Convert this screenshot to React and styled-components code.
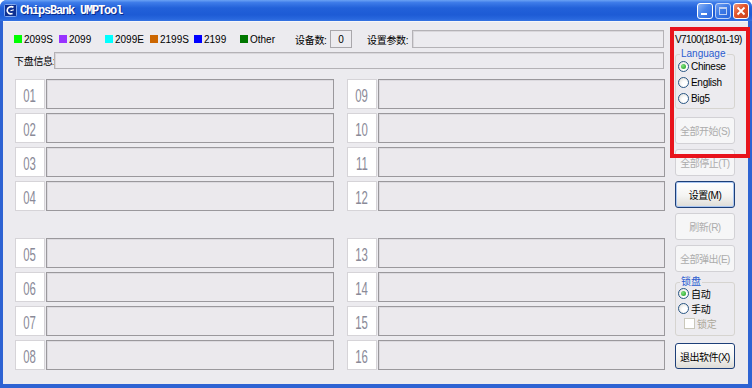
import React from 'react'
import styled, { createGlobalStyle } from 'styled-components'

const GlobalStyle = createGlobalStyle`
    html, body {
        margin: 0;
        padding: 0;
        background: #ffffff;
    }
    body {
        width: 752px;
        height: 388px;
        overflow: hidden;
        font-family: "Liberation Sans", "Noto Sans CJK SC", sans-serif;
    }
`

const Window = styled.div`
    position: relative;
    width: 752px;
    height: 388px;
    display: flex;
    flex-direction: column;
    background: #2e63d3;
    border-radius: 7px 7px 0 0;
    overflow: hidden;
`

const TitleBar = styled.div`
    height: 21px;
    flex: none;
    display: flex;
    align-items: center;
    padding: 0 3px 0 4px;
    background: linear-gradient(180deg, #6aa2f4 0%, #3e7ce9 12%, #2261d9 38%, #1d5bd5 70%, #2867dd 90%, #3673e2 100%);
`

const Title = styled.span`
    margin-left: 3px;
    flex: 1;
    color: #ffffff;
    font-family: "Liberation Mono", monospace;
    font-weight: bold;
    font-size: 12px;
    letter-spacing: -1.2px;
    text-shadow: 1px 1px 0 #0a2a8a;
`

const CaptionButtons = styled.div`
    display: flex;
    gap: 2px;
`

const CaptionButton = styled.div`
    width: 16px;
    height: 16px;
    box-sizing: border-box;
    border: 1px solid #ffffff;
    border-radius: 3px;
    display: flex;
    align-items: center;
    justify-content: center;
    background: ${p => p.close
        ? 'linear-gradient(135deg, #f1977a 0%, #e2542a 45%, #c9401c 100%)'
        : 'linear-gradient(135deg, #8fb5f5 0%, #4a86ec 45%, #2c66dd 100%)'};
    opacity: ${p => p.faded ? 0.7 : 1};
`

const Client = styled.div`
    flex: 1;
    margin: 0 4px 4px 3px;
    background: #ecebef;
    border-top: 1px solid #f7f7f9;
    padding: 8px 0 0 11px;
    display: flex;
`

const Main = styled.div`
    width: 650px;
    display: flex;
    flex-direction: column;
`

const TopRow = styled.div`
    height: 18px;
    display: flex;
    align-items: center;
    font-size: 10px;
    color: #000;
`

const LegendItem = styled.div`
    width: ${p => p.w}px;
    display: flex;
    align-items: center;
    gap: 2px;
`

const Swatch = styled.span`
    width: 8px;
    height: 8px;
    background: ${p => p.color};
`

const FieldLabel = styled.span`
    width: ${p => p.w}px;
    flex: none;
    font-size: 10px;
    letter-spacing: -0.3px;
    white-space: nowrap;
`

const CountBox = styled.div`
    width: 22px;
    height: 18px;
    box-sizing: border-box;
    border: 1px solid #a9a7ab;
    display: flex;
    align-items: center;
    justify-content: center;
    font-size: 10px;
    margin-right: 15px;
`

const TextBox = styled.div`
    flex: 1;
    height: ${p => p.h}px;
    box-sizing: border-box;
    border: 1px solid #b4b2b6;
    box-shadow: inset 1px 1px 0 #d9d7db;
`

const InfoRow = styled(TopRow)`
    margin-top: 4px;
    height: 17px;
`

const SlotBlock = styled.div`
    margin: ${p => p.top}px 0 0 1px;
    display: grid;
    grid-template-columns: 319px 318px;
    grid-template-rows: repeat(4, 30px);
    grid-auto-flow: column;
    column-gap: 13px;
    row-gap: 4px;
`

const Slot = styled.div`
    display: flex;
    gap: 1px;
`

const SlotNumber = styled.div`
    width: 30px;
    flex: none;
    box-sizing: border-box;
    background: #ffffff;
    border: 1px solid #d6d4d8;
    display: flex;
    align-items: center;
    justify-content: center;
    color: #8a8a98;
    font-size: 19px;
    line-height: 1;
    padding-top: 3px;

    span {
        display: inline-block;
        transform: scaleX(0.6);
    }
`

const SlotBar = styled.div`
    flex: 1;
    box-sizing: border-box;
    border: 1px solid #9a989c;
    box-shadow: inset 1px 1px 0 #dcdadf;
    background: #ebe9ed;
`

const Side = styled.div`
    width: 60px;
    margin-left: 11px;
    display: flex;
    flex-direction: column;
    font-size: 10px;
`

const Version = styled.div`
    height: 14px;
    margin-top: 3px;
    line-height: 14px;
    white-space: nowrap;
    letter-spacing: -0.6px;
`

const GroupBox = styled.div`
    position: relative;
    margin-top: ${p => p.top}px;
    height: ${p => p.h}px;
    box-sizing: border-box;
    border: 1px solid #d6d4d0;
    border-radius: 3px;
    padding: 3px 0 0 2px;
    display: flex;
    flex-direction: column;
`

const GroupTitle = styled.span`
    position: absolute;
    top: -7px;
    left: 4px;
    padding: 0 1px;
    background: #ecebef;
    color: #2a5ccf;
    font-size: 10px;
    line-height: 12px;
`

const Choice = styled.div`
    height: ${p => p.h}px;
    display: flex;
    align-items: center;
    gap: 2px;
    padding-left: ${p => p.indent || 0}px;
    color: ${p => p.disabled ? '#aca899' : '#000'};
    white-space: nowrap;
    letter-spacing: -0.3px;
`

const Radio = styled.span`
    width: 11px;
    height: 11px;
    flex: none;
    box-sizing: border-box;
    border-radius: 50%;
    border: 1px solid #2a5785;
    background: radial-gradient(circle at 65% 65%, #ffffff 30%, #dcdad2 100%);
    display: flex;
    align-items: center;
    justify-content: center;

    &::after {
        content: "";
        width: 5px;
        height: 5px;
        border-radius: 50%;
        background: ${p => p.checked ? 'radial-gradient(circle at 35% 35%, #7ee27e, #1f9a1f)' : 'transparent'};
    }
`

const Check = styled.span`
    width: 11px;
    height: 11px;
    flex: none;
    box-sizing: border-box;
    border: 1px solid #cac8bb;
    background: #ffffff;
`

const Button = styled.div`
    height: ${p => p.h || 27}px;
    margin-top: ${p => p.top}px;
    box-sizing: border-box;
    border-radius: 3px;
    display: flex;
    align-items: center;
    justify-content: center;
    font-size: 10px;
    letter-spacing: -0.5px;
    white-space: nowrap;
    color: ${p => p.disabled ? '#acacac' : '#000'};
    border: 1px solid ${p => p.disabled ? '#d2d1d5' : '#1d3f78'};
    background: ${p => p.disabled
        ? '#f6f6f7'
        : 'linear-gradient(180deg, #ffffff 0%, #f4f4f2 55%, #dedcd6 100%)'};
    box-shadow: ${p => p.focus ? 'inset 0 0 0 1px #a9c6f2' : 'none'};
`

const Annotation = styled.div`
    position: absolute;
    left: 670px;
    top: 27px;
    width: 80px;
    height: 131px;
    box-sizing: border-box;
    border: 4px solid #e8141c;
    pointer-events: none;
`

const legend = [
    { color: '#00ff00', label: '2099S', w: 45 },
    { color: '#9933ff', label: '2099', w: 46 },
    { color: '#00ffff', label: '2099E', w: 45 },
    { color: '#cc6600', label: '2199S', w: 44 },
    { color: '#0000ff', label: '2199', w: 46 },
    { color: '#007700', label: 'Other', w: 55 },
]

const pad = n => String(n).padStart(2, '0')

const AppIcon = () => (
    <svg width="13" height="13" viewBox="0 0 13 13">
        <rect x="0.5" y="0.5" width="12" height="12" rx="1" fill="#0d2f92" stroke="#7fa6ee" />
        <path d="M9.5 3.2 C7 1.8 3.4 3 3.2 6.3 C3 9 5.6 10.6 8.6 9.4" fill="none" stroke="#ffffff" strokeWidth="1.6" />
        <path d="M6.5 6.8 L9.8 5.8" stroke="#ffffff" strokeWidth="1.2" />
    </svg>
)

const SlotGroup = ({ top, left, right }) => (
    <SlotBlock top={top}>
        {[...left, ...right].map(n => (
            <Slot key={n}>
                <SlotNumber><span>{pad(n)}</span></SlotNumber>
                <SlotBar />
            </Slot>
        ))}
    </SlotBlock>
)

const App = () => {
    return (
        <Window>
            <GlobalStyle />
            <TitleBar>
                <AppIcon />
                <Title>ChipsBank UMPTool</Title>
                <CaptionButtons>
                    <CaptionButton>
                        <svg width="14" height="14" viewBox="0 0 14 14">
                            <rect x="3" y="9" width="6" height="2" fill="#ffffff" />
                        </svg>
                    </CaptionButton>
                    <CaptionButton faded>
                        <svg width="14" height="14" viewBox="0 0 14 14">
                            <rect x="3.5" y="3.5" width="7" height="7" fill="none" stroke="#ffffff" />
                            <rect x="3" y="3" width="8" height="2" fill="#ffffff" />
                        </svg>
                    </CaptionButton>
                    <CaptionButton close>
                        <svg width="14" height="14" viewBox="0 0 14 14">
                            <path d="M3.5 3.5 L10.5 10.5 M10.5 3.5 L3.5 10.5" stroke="#ffffff" strokeWidth="1.8" />
                        </svg>
                    </CaptionButton>
                </CaptionButtons>
            </TitleBar>

            <Client>
                <Main>
                    <TopRow>
                        {legend.map(item => (
                            <LegendItem key={item.label} w={item.w}>
                                <Swatch color={item.color} />
                                <span>{item.label}</span>
                            </LegendItem>
                        ))}
                        <FieldLabel w={35}>设备数:</FieldLabel>
                        <CountBox>0</CountBox>
                        <FieldLabel w={45}>设置参数:</FieldLabel>
                        <TextBox h={18} />
                    </TopRow>
                    <InfoRow>
                        <FieldLabel w={40}>下盘信息:</FieldLabel>
                        <TextBox h={17} />
                    </InfoRow>
                    <SlotGroup top={10} left={[1, 2, 3, 4]} right={[9, 10, 11, 12]} />
                    <SlotGroup top={27} left={[5, 6, 7, 8]} right={[13, 14, 15, 16]} />
                </Main>

                <Side>
                    <Version>V7100(18-01-19)</Version>
                    <GroupBox top={7} h={55}>
                        <GroupTitle>Language</GroupTitle>
                        <Choice h={16}><Radio checked />Chinese</Choice>
                        <Choice h={16}><Radio />English</Choice>
                        <Choice h={16}><Radio />Big5</Choice>
                    </GroupBox>
                    <Button top={8} disabled>全部开始(S)</Button>
                    <Button top={5} disabled>全部停止(T)</Button>
                    <Button top={5} focus>设置(M)</Button>
                    <Button top={5} disabled>刷新(R)</Button>
                    <Button top={5} disabled>全部弹出(E)</Button>
                    <GroupBox top={10} h={54}>
                        <GroupTitle>锁盘</GroupTitle>
                        <Choice h={15}><Radio checked />自动</Choice>
                        <Choice h={15}><Radio />手动</Choice>
                        <Choice h={15} indent={6} disabled><Check />锁定</Choice>
                    </GroupBox>
                    <Button top={7} h={26}>退出软件(X)</Button>
                </Side>
            </Client>

            <Annotation />
        </Window>
    )
}

export default App
